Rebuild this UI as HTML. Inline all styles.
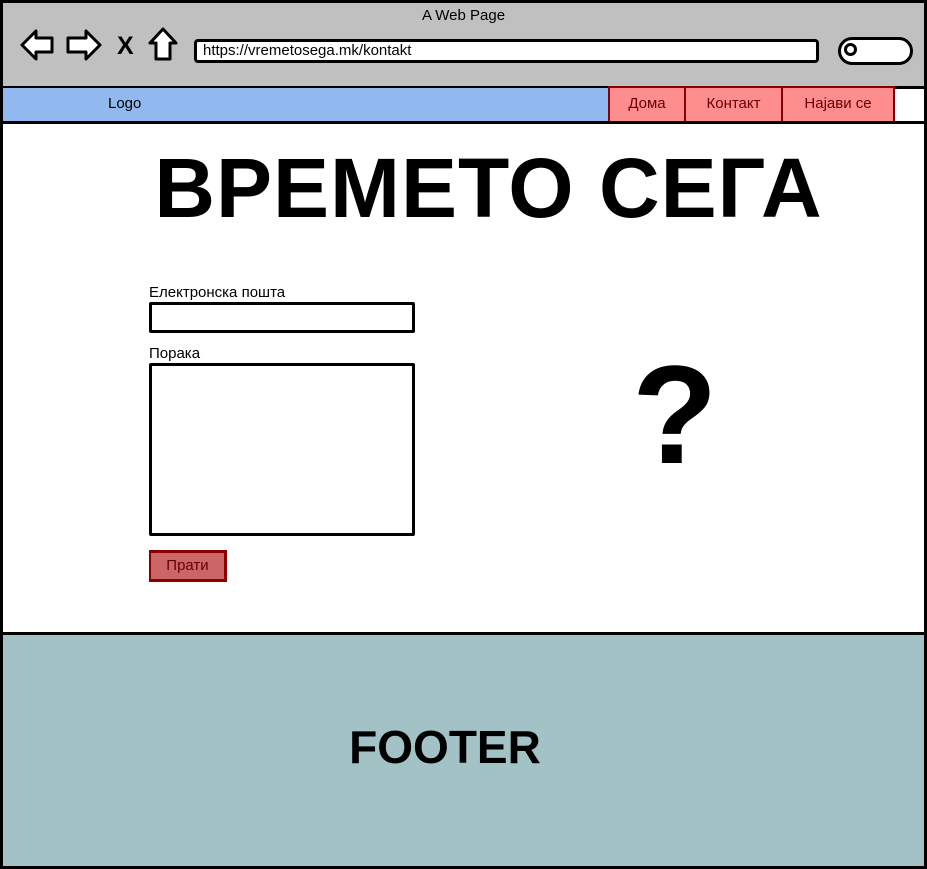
<!DOCTYPE html>
<html><head><meta charset="utf-8"><style>
body{margin:0;width:927px;height:869px;position:relative;overflow:hidden;background:#fff;font-family:"Liberation Sans",sans-serif;}
.a{position:absolute;box-sizing:border-box;}
</style></head><body>
<div class="a" style="left:0;top:0;width:927px;height:869px;border:3px solid #000;"></div>
<div class="a" style="left:3px;top:3px;width:921px;height:83px;background:#c0c0c0;"></div>
<div class="a" style="left:0;top:7px;width:927px;text-align:center;font-size:15px;">A Web Page</div>
<svg class="a" style="left:18px;top:26px" width="165" height="38" viewBox="0 0 165 38">
<g fill="#fff" stroke="#000" stroke-width="3" stroke-linejoin="round">
<path d="M4 19 L18 5 L18 12 L34 12 L34 26 L18 26 L18 33 Z"/>
<path d="M82 19 L68 5 L68 12 L50 12 L50 26 L68 26 L68 33 Z"/>
<path d="M145 3 L132 17 L138 17 L138 33 L152 33 L152 17 L158 17 Z"/>
</g>
<text x="99" y="28" font-size="25" font-weight="bold" font-family="Liberation Sans">X</text>
</svg>
<div class="a" style="left:194px;top:39px;width:625px;height:24px;background:#fff;border:3px solid #000;border-radius:4px;font-size:15px;padding:0 0 0 6px;line-height:17px;">https://vremetosega.mk/kontakt</div>
<div class="a" style="left:838px;top:37px;width:75px;height:28px;background:#fff;border:3px solid #000;border-radius:14px;"></div>
<div class="a" style="left:844px;top:43px;width:13px;height:13px;border:3px solid #000;border-radius:50%;"></div>
<div class="a" style="left:3px;top:86px;width:921px;height:3px;background:#000;"></div>
<div class="a" style="left:3px;top:88px;width:606px;height:33px;background:#92b9ef;"></div>
<div class="a" style="left:108px;top:95px;font-size:15px;">Logo</div>
<div class="a" style="left:608px;top:86px;width:287px;height:37px;background:#fe8e8e;border:2px solid #800;"></div>
<div class="a" style="left:684px;top:86px;width:2px;height:37px;background:#800;"></div>
<div class="a" style="left:781px;top:86px;width:2px;height:37px;background:#800;"></div>
<div class="a" style="left:610px;top:95px;width:74px;text-align:center;font-size:15px;color:#600;">Дома</div>
<div class="a" style="left:686px;top:95px;width:95px;text-align:center;font-size:15px;color:#600;">Контакт</div>
<div class="a" style="left:783px;top:95px;width:110px;text-align:center;font-size:15px;color:#600;">Најави се</div>
<div class="a" style="left:3px;top:121px;width:921px;height:3px;background:#000;"></div>
<div class="a" style="left:0;top:140px;width:927px;text-align:center;font-size:84px;font-weight:bold;padding-left:50px;letter-spacing:1px;">ВРЕМЕТО СЕГА</div>
<div class="a" style="left:149px;top:284px;font-size:15px;">Електронска пошта</div>
<div class="a" style="left:149px;top:302px;width:266px;height:31px;border:3px solid #000;border-radius:2px;"></div>
<div class="a" style="left:149px;top:345px;font-size:15px;">Порака</div>
<div class="a" style="left:149px;top:363px;width:266px;height:173px;border:3px solid #000;border-radius:2px;"></div>
<div class="a" style="left:149px;top:550px;width:78px;height:32px;background:#c66;border:3px solid #800;border-left-width:2px;color:#600;font-size:15px;text-align:center;line-height:26px;">Прати</div>
<div class="a" style="left:632px;top:340px;font-size:140px;font-weight:bold;line-height:150px;">?</div>
<div class="a" style="left:3px;top:632px;width:921px;height:3px;background:#000;"></div>
<div class="a" style="left:3px;top:635px;width:921px;height:231px;background:#a3c2c6;"></div>
<div class="a" style="left:0;top:720px;width:890px;text-align:center;font-size:46px;font-weight:bold;">FOOTER</div>
</body></html>
